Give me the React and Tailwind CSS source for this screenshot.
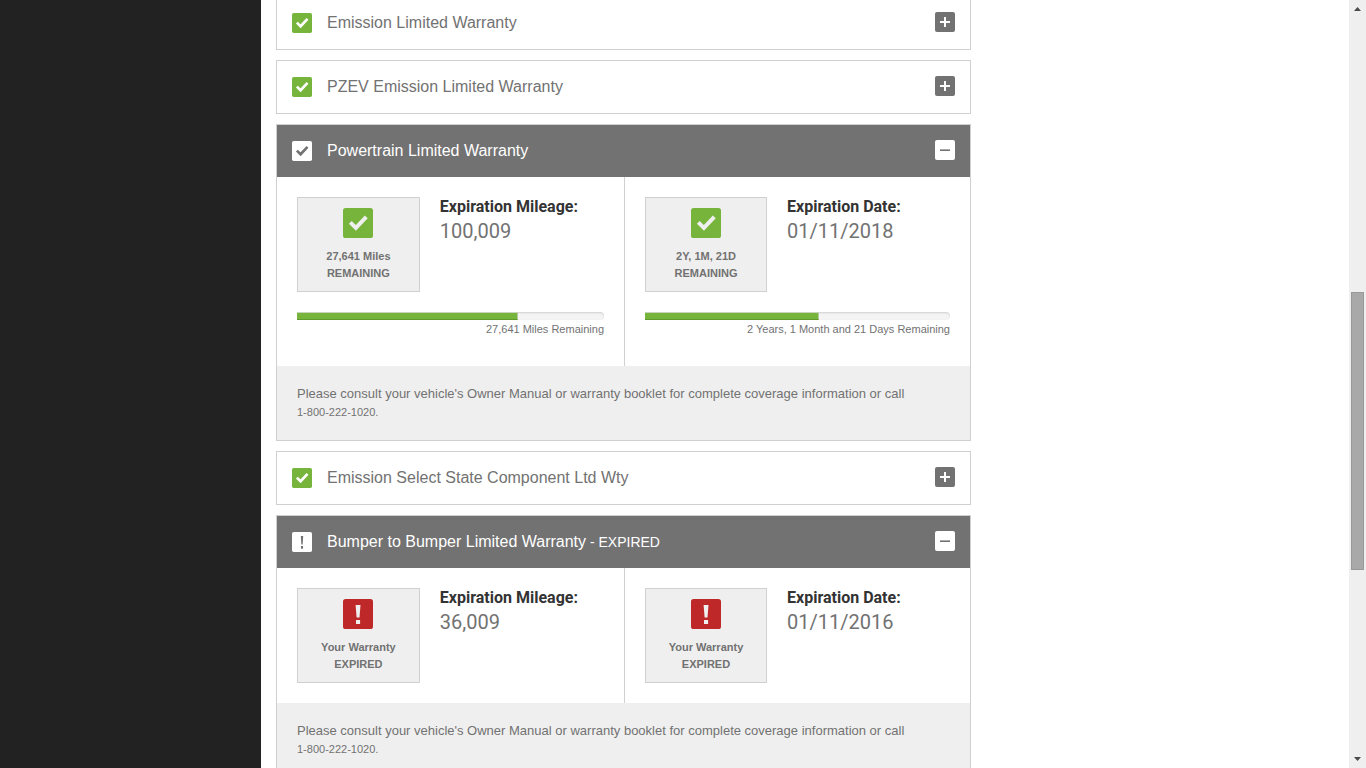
import { useState } from "react";

const NOTE =
  "Please consult your vehicle's Owner Manual or warranty booklet for complete coverage information or call ";

const WARRANTIES = [
  { title: "Emission Limited Warranty" },
  { title: "PZEV Emission Limited Warranty" },
  {
    title: "Powertrain Limited Warranty",
    open: true,
    terms: [
      {
        label: "Expiration Mileage:",
        value: "100,009",
        badge: ["27,641 Miles", "REMAINING"],
        progress: { percent: 72, text: "27,641 Miles Remaining" },
      },
      {
        label: "Expiration Date:",
        value: "01/11/2018",
        badge: ["2Y, 1M, 21D", "REMAINING"],
        progress: { percent: 57, text: "2 Years, 1 Month and 21 Days Remaining" },
      },
    ],
  },
  { title: "Emission Select State Component Ltd Wty" },
  {
    title: "Bumper to Bumper Limited Warranty",
    open: true,
    expired: true,
    terms: [
      { label: "Expiration Mileage:", value: "36,009", badge: ["Your Warranty", "EXPIRED"] },
      { label: "Expiration Date:", value: "01/11/2016", badge: ["Your Warranty", "EXPIRED"] },
    ],
  },
];

function StatusIcon({ expired, small, className }) {
  return (
    <svg viewBox="0 0 30 30" className={className} aria-hidden="true">
      <rect width="30" height="30" rx="2.6" fill="currentColor" />
      {expired ? (
        <g className="fill-(--mark)">
          <path d={small ? "M13.2 6h3.6l-.8 12.600h-2z" : "M12.6 6h4.9l-1 12.4h-2.9z"} />
          <rect x={small ? 13.4 : 13} y="21" width={small ? 3.2 : 4.1} height="4" />
        </g>
      ) : (
        <path
          d="M7.3 14.4 12.9 19.9 23.3 8.9"
          fill="none"
          strokeWidth="4"
          className="stroke-(--mark)"
        />
      )}
    </svg>
  );
}

function Term({ term, expired }) {
  return (
    <div className="p-5 first:border-r first:border-[#d0d0d0]">
      <div className="flex items-start gap-5">
        <div className="w-2/5 shrink-0 border border-[#d0d0d0] bg-[#efefef] pt-2.5 pb-[9px] text-center text-[11px] leading-[17px] font-bold">
          <StatusIcon
            expired={expired}
            className={
              expired
                ? "mx-auto mb-2.5 size-[30px] text-[#be2829] [--mark:#efefef]"
                : "mx-auto mb-2.5 size-[30px] text-[#76b43b] [--mark:#efefef]"
            }
          />
          {term.badge[0]}
          <br />
          {term.badge[1]}
        </div>
        <dl className="font-[Roboto,sans-serif]">
          <dt className="text-base leading-5 font-bold text-[#333]">{term.label}</dt>
          <dd className="text-xl leading-7">{term.value}</dd>
        </dl>
      </div>
      {term.progress && (
        <div className="mt-5 pb-2">
          <div className="h-2 overflow-hidden rounded-r-sm bg-[#f4f4f4] shadow-[inset_0_1px_2px_rgba(0,0,0,0.15)]">
            <div
              className="h-full border-t border-r border-b border-t-[#c9d5be] border-r-[#b5c9a2] border-b-[#5f9a2c] bg-[#76b43b]"
              style={{ width: `${term.progress.percent}%` }}
            />
          </div>
          <p className="text-right text-[11px] leading-[18px]">{term.progress.text}</p>
        </div>
      )}
    </div>
  );
}

function Warranty({ item }) {
  const [open, setOpen] = useState(Boolean(item.open));
  return (
    <section className="border border-[#d0d0d0]">
      <header
        className={
          open
            ? "flex h-[52px] items-center bg-[#727272] px-[15px] text-white"
            : "flex h-[52px] items-center px-[15px]"
        }
      >
        <StatusIcon
          small
          expired={item.expired}
          className={
            open
              ? "mr-[15px] size-5 text-white [--mark:#727272]"
              : "mr-[15px] size-5 text-[#76b43b] [--mark:white]"
          }
        />
        <h2 className="flex-1 text-base">
          {item.title}
          {item.expired && <span className="text-sm"> - EXPIRED</span>}
        </h2>
        <button
          type="button"
          aria-expanded={open}
          aria-label={item.title}
          onClick={() => setOpen(!open)}
          className={
            open
              ? "mb-0.5 size-5 cursor-pointer rounded-xs bg-white text-[#727272]"
              : "mb-0.5 size-5 cursor-pointer rounded-xs bg-[#727272] text-white"
          }
        >
          <svg viewBox="0 0 20 20" className="size-5" aria-hidden="true">
            <path
              d={open ? "M5 10.2h10" : "M5 10h10M10 5v10"}
              stroke="currentColor"
              strokeWidth={open ? 1.6 : 2}
            />
          </svg>
        </button>
      </header>
      {open && item.terms && (
        <>
          <div className="grid grid-cols-[348fr_345fr]">
            {item.terms.map((term) => (
              <Term key={term.label} term={term} expired={item.expired} />
            ))}
          </div>
          <p className="bg-[#efefef] px-5 py-[19px] text-[13px] leading-[18px]">
            {NOTE}
            <span className="text-[11px] whitespace-nowrap">1-800-222-1020.</span>
          </p>
        </>
      )}
    </section>
  );
}

function ScrollRail() {
  return (
    <div className="flex w-[17px] shrink-0 flex-col items-center bg-[#efefef]" aria-hidden="true">
      <svg viewBox="0 0 17 17" className="size-[17px] fill-[#4a4a4a]">
        <path d="M5 11h7L8.500 7z" />
      </svg>
      <div className="flex-[275]" />
      <div className="w-[13px] flex-[276] border border-[#999] bg-[#a9a9a9]" />
      <div className="flex-[181]" />
      <svg viewBox="0 0 17 17" className="size-[17px] fill-[#4a4a4a]">
        <path d="M5 6h7L8.500 10z" />
      </svg>
    </div>
  );
}

export default function App() {
  return (
    <div className="flex h-screen overflow-hidden bg-white font-['Liberation_Sans',Arial,sans-serif] text-[#727272]">
      <aside className="w-[261px] shrink-0 bg-[#222]" />
      <main className="min-w-0 flex-1 overflow-hidden px-[15px]">
        <div className="-mt-1 flex max-w-[695px] flex-col gap-2.5">
          {WARRANTIES.map((item) => (
            <Warranty key={item.title} item={item} />
          ))}
        </div>
      </main>
      <ScrollRail />
    </div>
  );
}
